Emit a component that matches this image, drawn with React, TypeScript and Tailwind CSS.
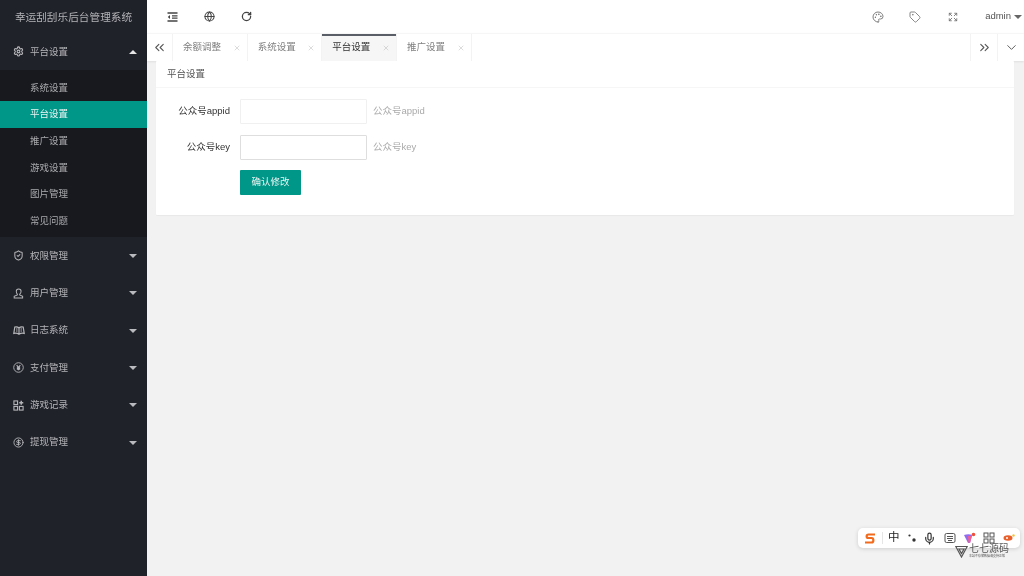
import { ChevronDown, ChevronsLeft, ChevronsRight, CircleDollarSign, Expand, Globe, Palette, RotateCw, Settings, ShieldCheck, Tag, X, Mic } from "lucide-react";
import type { ReactNode } from "react";

const font = { fontFamily: '"Liberation Sans","Noto Sans CJK SC",sans-serif' };

function Caret({ up = false }: { up?: boolean }) {
  return (
    <span
      className={
        up
          ? "h-0 w-0 border-x-[4px] border-b-[4px] border-x-transparent border-b-[#e6e6e6]"
          : "h-0 w-0 border-x-[4px] border-t-[4px] border-x-transparent border-t-[#b9bbbe]"
      }
    />
  );
}

function YenIcon() {
  return (
    <svg width="11" height="11" viewBox="0 0 12 12" fill="none" stroke="currentColor" strokeWidth="1">
      <circle cx="6" cy="6" r="5.2" />
      <path d="M4 3.4 6 6l2-2.6M6 6v3M4.2 6.4h3.6M4.2 7.8h3.6" strokeWidth="1.2" />
    </svg>
  );
}

function GameIcon() {
  return (
    <svg width="11" height="11" viewBox="0 0 12 12" fill="none" stroke="currentColor" strokeWidth="1.2">
      <rect x="1" y="1" width="4" height="4" />
      <rect x="1" y="7" width="4" height="4" />
      <rect x="7" y="7" width="4" height="4" />
      <path d="M9 .8v4.4M6.8 3h4.4" strokeWidth="1.6" />
    </svg>
  );
}

function UserIcon() {
  return (
    <svg width="11" height="11" viewBox="0 0 12 12" fill="none" stroke="currentColor" strokeWidth="1.1">
      <path d="M3.6 3.6a2.6 2.6 0 0 1 5.200 0c0 1.300-.6 2.700-1.500 3.200v.8l3.200 1.500v1.900H1.300V9.100l3.400-1.500v-.8C3.900 6.200 3.600 4.800 3.600 3.600z" />
    </svg>
  );
}

function BookIcon() {
  return (
    <svg width="12" height="11" viewBox="0 0 12 11" fill="none" stroke="currentColor" strokeWidth="1.2">
      <path d="M6 3C5 2 3 1.700 1.800 2L.8 8.500c1.700-.5 3.700-.2 5.200.7 1.500-.9 3.500-1.200 5.200-.7L10.200 2C9 1.700 7 2 6 3zM6 3v6" />
      <path d="M3 4h1.500M3 6h1.500M7.500 4H9M7.500 6H9" />
    </svg>
  );
}

function ShrinkIcon() {
  return (
    <svg width="11" height="10" viewBox="0 0 11 10" fill="none" stroke="currentColor" strokeWidth="1.3">
      <path d="M.5 1h10M5 3.800h5.500M5 6.200h5.500M.5 9h10" />
      <path d="M3 3 .8 5 3 7z" fill="currentColor" stroke="none" />
    </svg>
  );
}

function MenuRow({ icon, label, up = false }: { icon: ReactNode; label: string; up?: boolean }) {
  return (
    <div className="flex h-[37.33px] items-center pl-[13px] pr-[10px] text-[9.5px] text-[#b4b5b8]">
      <span className="flex w-[17px] shrink-0 items-center text-[#b4b5b8]">{icon}</span>
      <span className="flex-1">{label}</span>
      <Caret up={up} />
    </div>
  );
}

function SubRow({ label, active = false }: { label: string; active?: boolean }) {
  return (
    <div
      className={
        active
          ? "flex h-[26.67px] items-center bg-[#009688] pl-[30px] text-[9.5px] text-[#e8f5f3]"
          : "flex h-[26.67px] items-center pl-[30px] text-[9.5px] text-[#a9aaad]"
      }
    >
      {label}
    </div>
  );
}

function TabItem({ label, active = false }: { label: string; active?: boolean }) {
  return (
    <div
      className={
        active
          ? "relative flex h-full w-[74.67px] items-center border-r border-[#f3f3f3] bg-[#f6f6f6] pl-[10px] text-[9.5px] text-[#333]"
          : "relative flex h-full w-[74.67px] items-center border-r border-[#f3f3f3] pl-[10px] text-[9.5px] text-[#808080]"
      }
    >
      {active && <span className="absolute inset-x-0 top-0 h-[1.5px] bg-[#5a5e66]" />}
      <span className="flex-1">{label}</span>
      <X size={8} strokeWidth={1.5} className="mr-[6px] text-[#b8b8b8]" />
    </div>
  );
}

function FormRow({ label, hint, strong = false }: { label: string; hint: string; strong?: boolean }) {
  return (
    <div className="flex h-[25px] items-center">
      <label className="w-[74px] text-right text-[9.5px] text-[#333]">{label}</label>
      <input
        className={
          strong
            ? "ml-[10px] h-[25px] w-[127px] rounded-[1px] border border-[#dedede] bg-white"
            : "ml-[10px] h-[25px] w-[127px] rounded-[1px] border border-[#f0f0f0] bg-white"
        }
      />
      <span className="ml-[6px] text-[9.5px] text-[#aaaaaa]">{hint}</span>
    </div>
  );
}

export default function App() {
  return (
    <div style={font} className="relative flex h-[576px] w-[1024px] overflow-hidden bg-[#f2f2f2] blur-[0.3px]">
      <aside className="w-[147px] shrink-0 bg-[#20222a]">
        <div className="flex h-[33px] items-center justify-center text-[10.67px] text-[#b2b3b6]">幸运刮刮乐后台管理系统</div>
        <MenuRow icon={<Settings size={11} strokeWidth={2.4} />} label="平台设置" up />
        <div className="bg-[#18191f] pb-[3px] pt-[4px]">
          <SubRow label="系统设置" />
          <SubRow label="平台设置" active />
          <SubRow label="推广设置" />
          <SubRow label="游戏设置" />
          <SubRow label="图片管理" />
          <SubRow label="常见问题" />
        </div>
        <MenuRow icon={<ShieldCheck size={11} strokeWidth={2.2} />} label="权限管理" />
        <MenuRow icon={<UserIcon />} label="用户管理" />
        <MenuRow icon={<BookIcon />} label="日志系统" />
        <MenuRow icon={<YenIcon />} label="支付管理" />
        <MenuRow icon={<GameIcon />} label="游戏记录" />
        <MenuRow icon={<CircleDollarSign size={11} strokeWidth={2} />} label="提现管理" />
      </aside>

      <main className="flex min-w-0 flex-1 flex-col">
        <header className="flex h-[33px] items-center bg-white text-[#444]">
          <div className="flex items-center gap-[26px] pl-[20px]">
            <ShrinkIcon />
            <Globe size={11} strokeWidth={2.2} />
            <RotateCw size={11} strokeWidth={2.8} />
          </div>
          <div className="ml-auto flex items-center pr-[2px] text-[#777]">
            <Palette size={12} strokeWidth={1.9} />
            <Tag size={12} strokeWidth={1.8} className="ml-[25px]" />
            <Expand size={10} strokeWidth={2.2} className="ml-[27px]" />
            <span className="ml-[27px] text-[9.5px] text-[#555]">admin</span>
            <span className="ml-[3px] h-0 w-0 border-x-[4px] border-t-[4px] border-x-transparent border-t-[#666]" />
          </div>
        </header>
        <nav className="flex h-[28px] items-stretch border-t border-[#f6f6f6] bg-white shadow-[0_1px_2px_rgba(0,0,0,0.08)]">
          <div className="flex w-[26px] items-center justify-center border-r border-[#f3f3f3] text-[#555]">
            <ChevronsLeft size={15} strokeWidth={1.7} />
          </div>
          <TabItem label="余额调整" />
          <TabItem label="系统设置" />
          <TabItem label="平台设置" active />
          <TabItem label="推广设置" />
          <div className="flex-1" />
          <div className="flex w-[27px] items-center justify-center border-l border-[#f3f3f3] text-[#555]">
            <ChevronsRight size={15} strokeWidth={1.7} />
          </div>
          <div className="flex w-[27px] items-center justify-center border-l border-[#f3f3f3] text-[#555]">
            <ChevronDown size={15} strokeWidth={1.5} />
          </div>
        </nav>
        <section className="ml-[9px] mr-[10px] h-[154px] rounded-[1px] bg-white shadow-[0_1px_1px_rgba(0,0,0,0.04)]">
          <div className="flex h-[27px] items-center border-b border-[#f6f6f6] pl-[11px] text-[9.5px] text-[#555]">平台设置</div>
          <div className="flex flex-col gap-[10.5px] pt-[11px]">
            <FormRow label="公众号appid" hint="公众号appid" />
            <FormRow label="公众号key" hint="公众号key" strong />
            <button className="ml-[84px] h-[25px] w-[61px] rounded-[1px] bg-[#009688] text-[9.5px] text-[#e8f5f3]">确认修改</button>
          </div>
        </section>
      </main>

      <div className="absolute left-[858px] top-[528px] flex h-[20px] w-[162px] items-center rounded-[5px] bg-white pl-[6px] shadow-[0_1px_4px_rgba(0,0,0,0.15)]">
        <svg width="12" height="11" viewBox="0 0 12 11" fill="none" stroke="#f26a1b" strokeWidth="2.2"><path d="M11 1.500H4.500C2 1.500 2 5 4.500 5h3c2.500 0 2.500 4.500 0 4.500H1" /></svg>
        <span className="ml-[6px] h-[12px] w-px bg-[#e5e5e5]" />
        <span className="ml-[5px] text-[11.5px] text-[#222]">中</span>
        <svg className="ml-[7px]" width="10" height="10" viewBox="0 0 10 10" fill="#333"><circle cx="2.500" cy="2.500" r="1.100" /><circle cx="7" cy="7" r="1.700" /></svg>
        <Mic size={13} strokeWidth={2.2} className="ml-[6px] text-[#333]" />
        <svg className="ml-[8px]" width="12" height="12" viewBox="0 0 12 12" fill="none" stroke="#555"><rect x="1" y="1.500" width="10" height="9" rx="1.500" /><path d="M3 4.500h6M3 6.500h6M4 8.500h4" /></svg>
        <svg className="ml-[7px]" width="13" height="13" viewBox="0 0 13 13"><path d="M1 3c3-1 6-1 8 0l-2 8H5z" fill="#8f6cf0" /><path d="M5 4h4L7 11H5.500z" fill="#f06292" /><circle cx="10.500" cy="2.500" r="1.800" fill="#f0503c" /></svg>
        <svg className="ml-[7px]" width="12" height="12" viewBox="0 0 12 12" fill="none" stroke="#555"><rect x="1" y="1" width="4" height="4" /><rect x="7" y="1" width="4" height="4" /><rect x="1" y="7" width="4" height="4" /><rect x="7" y="7" width="4" height="4" /></svg>
        <svg className="ml-[8px]" width="12" height="10" viewBox="0 0 12 10"><ellipse cx="5" cy="5" rx="4.500" ry="2.800" fill="#e8602c" /><circle cx="4" cy="5" r="1" fill="#fff" /><circle cx="10.500" cy="2.500" r="1.200" fill="#f5c33b" /></svg>
      </div>

      <div className="absolute left-[955px] top-[544px] flex items-center gap-[1px] text-[#555]">
        <svg width="13" height="13" viewBox="0 0 13 13" fill="none" stroke="#555" strokeWidth="1.2"><path d="M.8 1.500h11.400L6.500 12zM4 4h5L6.500 8.500z" /></svg>
        <div className="flex flex-col leading-none">
          <span className="text-[10px] leading-[10px]">七七源码</span>
          <span className="mt-[1px] text-[3px] leading-[3px]">本站不存储数据请支持正版</span>
        </div>
      </div>
    </div>
  );
}
